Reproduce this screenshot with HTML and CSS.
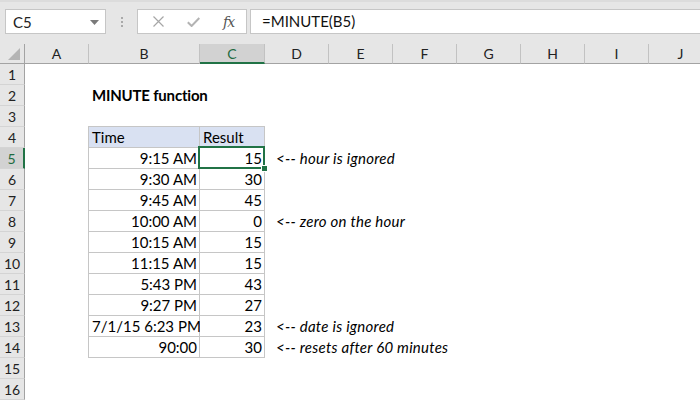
FILE: index.html
```html
<!DOCTYPE html>
<html>
<head>
<meta charset="utf-8">
<link rel="stylesheet" href="styles.css">
</head>
<body>
<div class="app">
  <div class="toolbar">
    <div class="namebox">
      <span class="nb-text">C5</span>
      <svg class="nb-arrow" width="9" height="5" viewBox="0 0 9 5"><path d="M0 0H9L4.5 5Z" fill="#7a7a7a"/></svg>
    </div>
    <div class="grip"><i></i><i></i><i></i></div>
    <div class="fbtns">
      <svg class="ic-x" width="11" height="11" viewBox="0 0 11 11"><path d="M0.5 0.5L10.5 10.5M10.5 0.5L0.5 10.5" stroke="#a6a6a6" stroke-width="1.2" fill="none"/></svg>
      <svg class="ic-check" width="13" height="10" viewBox="0 0 13 10"><path d="M0.8 5.2L4.6 9L12.3 1" stroke="#b3b3b3" stroke-width="2" fill="none"/></svg>
      <span class="ic-fx">fx</span>
    </div>
    <div class="finput">=MINUTE(B5)</div>
  </div>
  <div class="sheet">
    <div class="ch corner"><svg width="14" height="14" viewBox="0 0 14 14"><path d="M13 1V13H1Z" fill="#b4b4b4"/></svg></div>
    <div class="ch">A</div>
    <div class="ch">B</div>
    <div class="ch sel">C</div>
    <div class="ch">D</div>
    <div class="ch">E</div>
    <div class="ch">F</div>
    <div class="ch">G</div>
    <div class="ch">H</div>
    <div class="ch">I</div>
    <div class="ch">J</div>

    <div class="rh">1</div>
    <div class="rh">2</div>
    <div class="rh">3</div>
    <div class="rh">4</div>
    <div class="rh sel">5</div>
    <div class="rh">6</div>
    <div class="rh">7</div>
    <div class="rh">8</div>
    <div class="rh">9</div>
    <div class="rh">10</div>
    <div class="rh">11</div>
    <div class="rh">12</div>
    <div class="rh">13</div>
    <div class="rh">14</div>
    <div class="rh">15</div>
    <div class="rh">16</div>

    <div class="title">MINUTE function</div>

    <div class="table">
      <div class="c hd">Time</div><div class="c hd">Result</div>
      <div class="c num">9:15 AM</div><div class="c num active">15</div>
      <div class="c num">9:30 AM</div><div class="c num">30</div>
      <div class="c num">9:45 AM</div><div class="c num">45</div>
      <div class="c num">10:00 AM</div><div class="c num">0</div>
      <div class="c num">10:15 AM</div><div class="c num">15</div>
      <div class="c num">11:15 AM</div><div class="c num">15</div>
      <div class="c num">5:43 PM</div><div class="c num">43</div>
      <div class="c num">9:27 PM</div><div class="c num">27</div>
      <div class="c num">7/1/15 6:23 PM</div><div class="c num">23</div>
      <div class="c num">90:00</div><div class="c num">30</div>
    </div>

    <div class="note n5">&lt;-- hour is ignored</div>
    <div class="note n8">&lt;-- zero on the hour</div>
    <div class="note n13">&lt;-- date is ignored</div>
    <div class="note n14">&lt;-- resets after 60 minutes</div>
  </div>
</div>
</body>
</html>
```
FILE: styles.css
```css
html, body {
  margin: 0;
  padding: 0;
  background: #ffffff;
  overflow: hidden;
}
.app {
  width: 700px;
  height: 400px;
  overflow: hidden;
  font-family: Lato, "Open Sans", sans-serif;
  color: #000;
}
.toolbar {
  height: 44px;
  box-sizing: border-box;
  background: #e6e6e6;
  border-top: 2px solid #dcdcdc;
  padding: 7px 0 0 5px;
  display: flex;
  align-items: flex-start;
}
.namebox {
  width: 101px;
  height: 25px;
  box-sizing: border-box;
  background: #fff;
  border: 1px solid #c6c6c6;
  display: flex;
  align-items: center;
  justify-content: space-between;
  padding: 0 6px 0 7px;
}
.nb-text {
  font-size: 15px;
  color: #222;
}
.nb-arrow {
  margin-top: 1px;
}
.grip {
  width: 31px;
  height: 25px;
  display: flex;
  flex-direction: column;
  align-items: center;
  justify-content: center;
  gap: 2px;
}
.grip i {
  display: block;
  width: 2px;
  height: 2px;
  background: #a9a9a9;
}
.fbtns {
  width: 110px;
  height: 25px;
  box-sizing: border-box;
  background: #fff;
  border: 1px solid #c6c6c6;
  display: flex;
  align-items: center;
  padding-left: 15px;
}
.ic-x {
  margin-right: 23px;
}
.ic-check {
  margin-right: 23px;
}
.ic-fx {
  font-family: "DejaVu Serif", "Liberation Serif", serif;
  font-style: italic;
  font-size: 14px;
  color: #555;
  letter-spacing: -1px;
}
.finput {
  flex: 1;
  height: 25px;
  box-sizing: border-box;
  margin-left: 3px;
  background: #fff;
  border: 1px solid #c6c6c6;
  border-right: none;
  font-size: 15px;
  line-height: 23px;
  padding-left: 11px;
  color: #111;
}
.sheet {
  display: grid;
  grid-template-columns: 25px 64px 111px 65px 64px 64px 64px 64px 64px 64px 64px;
  grid-template-rows: 20px repeat(16, 21px);
  width: 713px;
}
.ch {
  background: #e6e6e6;
  box-sizing: border-box;
  border-right: 1px solid #c2c2c2;
  border-bottom: 1px solid #a3a3a3;
  font-size: 14px;
  line-height: 20px;
  text-align: center;
  color: #222;
  grid-row: 1;
}
.ch.corner {
  position: relative;
  border-right: 1px solid #a3a3a3;
}
.ch.corner svg {
  position: absolute;
  right: 3px;
  bottom: 2px;
}
.ch.sel {
  background: #d2d2d2;
  border-bottom: 2px solid #217346;
  color: #1e6b41;
  line-height: 19px;
}
.rh {
  grid-column: 1;
  background: #e6e6e6;
  box-sizing: border-box;
  border-right: 1px solid #a3a3a3;
  border-bottom: 1px solid #d4d4d4;
  font-size: 14px;
  line-height: 21px;
  text-align: center;
  color: #222;
}
.rh.sel {
  background: #d2d2d2;
  border-right: 2px solid #217346;
  color: #1e6b41;
}
.title {
  grid-row: 3;
  grid-column: 3 / span 3;
  font-weight: bold;
  font-size: 15px;
  line-height: 21px;
  padding-left: 3px;
  letter-spacing: -0.2px;
  white-space: nowrap;
}
.table {
  grid-row: 5 / span 11;
  grid-column: 3 / span 2;
  margin: -1px 0 0 -1px;
  display: grid;
  grid-template-columns: 110px 64px;
  grid-auto-rows: 20px;
  gap: 1px;
  padding: 1px;
  background: #c6c6c6;
}
.c {
  background: #fff;
  font-size: 15px;
  line-height: 21px;
  white-space: nowrap;
  padding: 0 3px;
  overflow: visible;
}
.c.hd {
  background: #d9e1f2;
}
.c.num {
  text-align: right;
  padding-right: 2px;
}
.c.active {
  position: relative;
}
.c.active::before {
  content: "";
  position: absolute;
  top: -2px;
  left: -2px;
  right: -1px;
  bottom: -1px;
  border: 2px solid #217346;
  z-index: 2;
}
.c.active::after {
  content: "";
  position: absolute;
  right: -4px;
  bottom: -4px;
  width: 5px;
  height: 5px;
  background: #217346;
  border: 1px solid #fff;
  z-index: 3;
}
.note {
  grid-column: 5 / span 7;
  font-style: italic;
  font-size: 15px;
  line-height: 21px;
  padding-left: 11px;
  letter-spacing: 0.25px;
  white-space: nowrap;
}
.n5 { grid-row: 6; }
.n8 { grid-row: 9; }
.n13 { grid-row: 14; }
.n14 { grid-row: 15; }
```
